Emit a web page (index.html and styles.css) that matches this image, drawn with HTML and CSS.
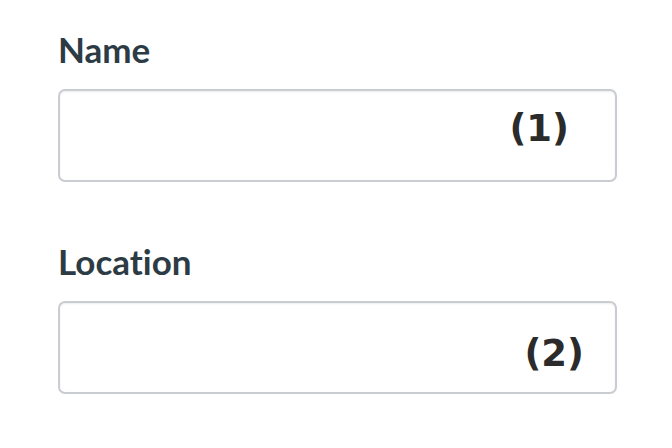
FILE: index.html
```html
<!DOCTYPE html>
<html lang="en">
<head>
<meta charset="utf-8">
<title>Form</title>
<link rel="stylesheet" href="styles.css">
</head>
<body>
<form class="form">
  <div class="field">
    <label class="label" for="name">Name</label>
    <div class="control">
      <input class="input" id="name" type="text">
      <span class="marker marker-1">(1)</span>
    </div>
  </div>
  <div class="field">
    <label class="label" for="location">Location</label>
    <div class="control">
      <input class="input" id="location" type="text">
      <span class="marker marker-2">(2)</span>
    </div>
  </div>
</form>
</body>
</html>
```
FILE: styles.css
```css
html, body {
  margin: 0;
  padding: 0;
  background: #ffffff;
}

.form {
  padding: 29px 55px 0 58px;
  display: flex;
  flex-direction: column;
  gap: 59px;
}

.label {
  display: block;
  font-family: Lato, "Liberation Sans", sans-serif;
  font-weight: 700;
  font-size: 35px;
  line-height: 41px;
  color: #2d3b45;
  margin-bottom: 19px;
  font-variant-ligatures: none;
}

.control {
  position: relative;
}

.input {
  display: block;
  box-sizing: border-box;
  width: 100%;
  height: 93px;
  margin: 0;
  border: 2px solid #c9cdd1;
  border-radius: 7px;
  background: #ffffff;
  box-shadow: inset 0 1px 2px rgba(0, 0, 0, 0.08);
  outline: none;
}

.marker {
  position: absolute;
  font-family: "DejaVu Sans", sans-serif;
  font-weight: 700;
  font-size: 37px;
  line-height: 1;
  color: #2b2b2b;
}

.marker-1 {
  right: 48px;
  top: 21px;
}

.marker-2 {
  right: 33px;
  top: 34px;
}
```
